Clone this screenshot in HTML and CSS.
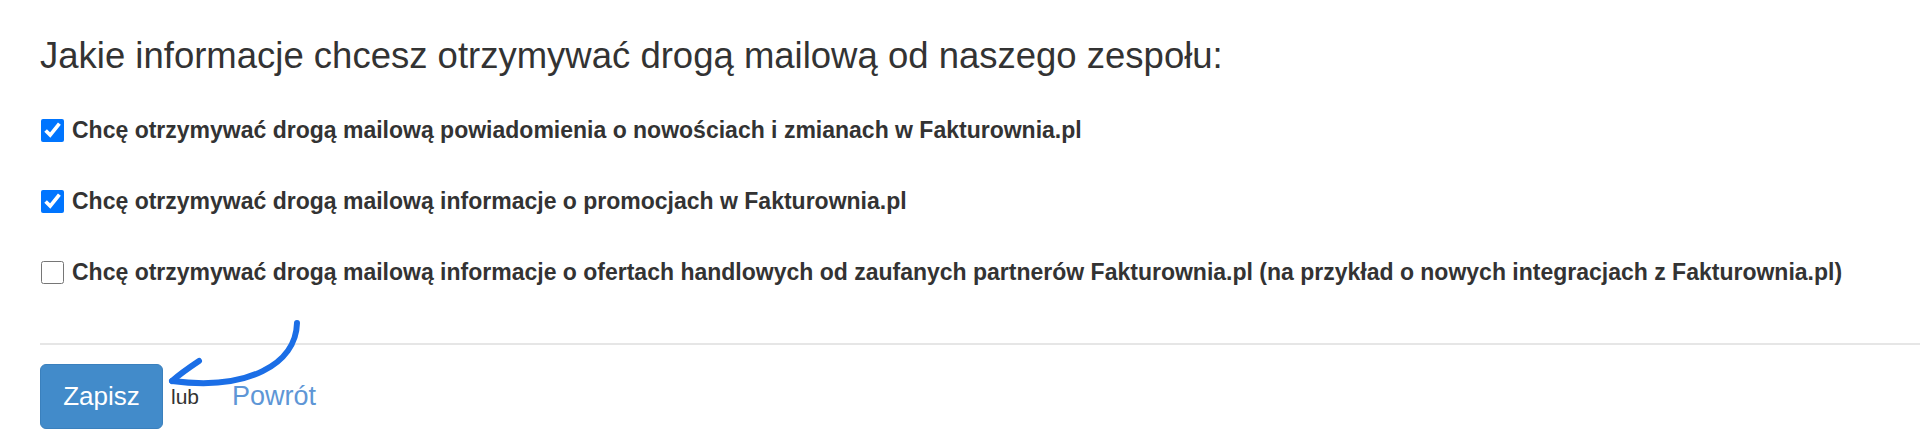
FILE: index.html
```html
<!DOCTYPE html>
<html lang="pl">
<head>
<meta charset="utf-8">
<title>Zgody mailowe</title>
<link rel="stylesheet" href="styles.css">
</head>
<body>
<div class="page">
  <h2 class="title">Jakie informacje chcesz otrzymywać drogą mailową od naszego zespołu:</h2>
  <div class="options">
    <label class="option"><input type="checkbox" checked><span>Chcę otrzymywać drogą mailową powiadomienia o nowościach i zmianach w Fakturownia.pl</span></label>
    <label class="option"><input type="checkbox" checked><span>Chcę otrzymywać drogą mailową informacje o promocjach w Fakturownia.pl</span></label>
    <label class="option"><input type="checkbox"><span>Chcę otrzymywać drogą mailową informacje o ofertach handlowych od zaufanych partnerów Fakturownia.pl (na przykład o nowych integracjach z Fakturownia.pl)</span></label>
  </div>
  <hr class="divider">
  <div class="actions">
    <button class="btn-primary" type="button">Zapisz</button>
    <span class="or">lub</span>
    <a class="back" href="#">Powrót</a>
  </div>
</div>
<svg class="arrow" width="1920" height="447" viewBox="0 0 1920 447" xmlns="http://www.w3.org/2000/svg">
  <path d="M297 323 C296 364 248 391 172 381" fill="none" stroke="#1b6ee6" stroke-width="6" stroke-linecap="round"/>
  <path d="M172 381 C181 373 190 367 199 361" fill="none" stroke="#1b6ee6" stroke-width="6" stroke-linecap="round"/>
</svg>
</body>
</html>
```

FILE: styles.css
```css
html, body {
  margin: 0;
  padding: 0;
  background: #ffffff;
}

body {
  font-family: "Liberation Sans", Arial, sans-serif;
  color: #333333;
  width: 1920px;
  height: 447px;
  overflow: hidden;
  position: relative;
}

.page {
  padding: 35px 0 0 40px;
  display: flex;
  flex-direction: column;
}

.title {
  margin: 0;
  font-size: 36.5px;
  line-height: 42px;
  font-weight: 400;
  color: #333333;
}

.options {
  margin-top: 41px;
  display: flex;
  flex-direction: column;
  gap: 47px;
}

.option {
  display: flex;
  align-items: center;
  height: 24px;
  font-size: 23px;
  font-weight: 700;
  color: #333333;
}

.option input {
  width: 23px;
  height: 23px;
  margin: 0 8px 0 1px;
  accent-color: #0075ff;
}

.divider {
  margin: 59px 0 0 0;
  border: 0;
  height: 2px;
  background: #e6e6e6;
}

.actions {
  margin-top: 19px;
  display: flex;
  align-items: center;
}

.btn-primary {
  width: 123px;
  height: 65px;
  background: #428bca;
  border: 1px solid #3a80bd;
  border-radius: 6px;
  color: #ffffff;
  font-family: "Liberation Sans", Arial, sans-serif;
  font-size: 26px;
  padding: 0;
}

.or {
  margin-left: 8px;
  font-size: 21px;
  color: #333333;
}

.back {
  margin-left: 33px;
  font-size: 27px;
  color: #5e96d6;
  text-decoration: none;
}

.arrow {
  position: absolute;
  left: 0;
  top: 0;
  pointer-events: none;
}
```
